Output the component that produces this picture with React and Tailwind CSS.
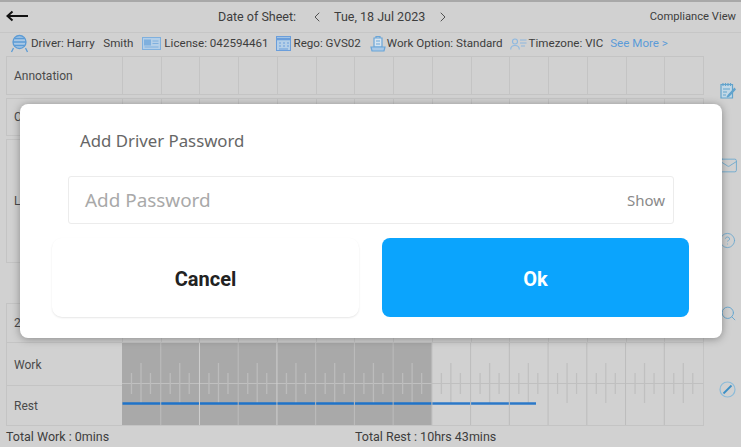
import { ChevronLeft, ChevronRight, Mail, CircleHelp, Search } from 'lucide-react';

const cells = Array.from({ length: 15 }, (_, i) => i);

const GridRow = ({ label, className = '' }) => (
    <div className={`flex border border-[#c4c4c4] ${className}`}>
        <div className="w-[115px] shrink-0 flex items-center pl-[7px] text-[12px] text-[#4a4a4a]">{label}</div>
        {cells.map((c) => (
            <div key={c} className="flex-1 border-l border-[#c4c4c4]" />
        ))}
    </div>
);

// driver badge
const DriverIcon = () => (
    <svg width="19" height="19" viewBox="0 0 19 19" fill="none" stroke="#5b9bd5" strokeWidth="1.3">
        <circle cx="9.5" cy="8" r="6.5" fill="#a9c8e6" />
        <path d="M3 8h13M4.500 4.500h10M4.500 11.500h10M3.500 14l-2 4M15.500 14l2 4" />
    </svg>
);

const LicenseIcon = () => (
    <svg width="19" height="13" viewBox="0 0 19 13" fill="none" stroke="#7fb0de" strokeWidth="1">
        <rect x="0.5" y="0.5" width="18" height="12" fill="#b4cfe8" />
        <rect x="2.500" y="3" width="6" height="5" fill="#7fb0de" />
        <path d="M10.500 4h6M10.500 6.500h6M2.500 10h14" />
    </svg>
);

const RegoIcon = () => (
    <svg width="15" height="15" viewBox="0 0 15 15" fill="none" stroke="#6a9edb" strokeWidth="1">
        <rect x="0.5" y="0.5" width="14" height="14" fill="#b4cfe8" />
        <path d="M0.5 3h14" strokeWidth="2.500" />
        <path d="M3 7h2M7 7h2M11 7h2M3 10h2M7 10h2M11 10h2M3 13h9" />
    </svg>
);

const WorkIcon = () => (
    <svg width="16" height="18" viewBox="0 0 16 18" fill="none" stroke="#6aa5d8" strokeWidth="1.200">
        <path d="M4 3h8v9H4z" fill="#d6e4f0" />
        <path d="M6 3V1.500h4V3M6 6h4M6 9h4" />
        <path d="M1 12h14l-1 4H2z" fill="#a9c8e6" />
    </svg>
);

const TimezoneIcon = () => (
    <svg width="17" height="12" viewBox="0 0 17 12" fill="none" stroke="#8db8e0" strokeWidth="1.100">
        <circle cx="5" cy="3.500" r="2.500" />
        <path d="M0.700 11.500c0-3 2-4 4.300-4s4.300 1 4.300 4" />
        <path d="M10 2h6.500M10 5h6.500M11 8h4" />
    </svg>
);

const NoteIcon = () => (
    <svg width="16" height="17" viewBox="0 0 16 17" fill="none" stroke="#62a3cc" strokeWidth="1.200">
        <path d="M1 2.500h11.500V16H1z" fill="#c3d8e6" />
        <path d="M3 1v3M5.500 1v3M8 1v3M10.500 1v3M3 7h7M3 10h4M3 13h3" />
        <path d="M14.500 6.500L8.500 13l-1.500 2 2.200-1 6-6.500z" fill="#62a3cc" />
    </svg>
);

const SlashIcon = () => (
    <svg width="17" height="17" viewBox="0 0 17 17" fill="none">
        <circle cx="8.500" cy="8.500" r="7.500" stroke="#8dbcd9" strokeWidth="1.200" />
        <path d="M4.500 12.500L12.500 4.500" stroke="#3a8fc6" strokeWidth="1.800" />
    </svg>
);

// tick marks + blue rest line under the Work / Rest rows
const DutyChart = () => {
    const w = 581;
    const cw = w / 15;
    return (
        <svg width={w} height="82" viewBox={`0 0 ${w} 82`} className="absolute left-0 top-0">
            <rect x="0" y="0" width={cw * 8} height="82" fill="#a9a9a9" />
            <path d="M0 40.500H581" stroke="#c0c0c0" strokeWidth="1" />
            {cells.map((c) => {
                const x = c * cw;
                const bright = c === 2 || c === 4;
                return (
                    <g key={c} stroke={c < 8 ? '#bcbcbc' : '#c0c0c0'} strokeWidth="1.300">
                        <path d={`M${x + 9.500} 30V51M${x + 19} 20V60M${x + 28.500} 30V51`} />
                        {c > 0 && (
                            <path d={`M${x} 0V82`} stroke={bright ? '#d0d0d0' : c < 8 ? '#bdbdbd' : '#bcbcbc'} strokeWidth="1" />
                        )}
                    </g>
                );
            })}
            {cells.slice(0, 11).map((c) => (
                <path
                    key={c}
                    d={`M${c * cw + 0.500} 60.500H${c === 10 ? 414 : (c + 1) * cw - 0.500}`}
                    stroke={c < 8 ? '#1f73c9' : '#2b78c8'}
                    strokeWidth="2.500"
                />
            ))}
        </svg>
    );
};

export default function App() {
    return (
        <div className="relative w-[741px] h-[447px] overflow-hidden bg-[#d1d1d1] font-['Roboto',sans-serif] text-[#3d3d3d]">
            {/* Top bar */}
            <header className="h-[33px] flex items-center border-t-2 border-b border-t-[#a8a8a8] border-b-[#c6c6c6] pl-[6px] pr-[5px]">
                <svg width="22" height="12" viewBox="0 0 22 12" fill="none" stroke="#111" strokeWidth="2" className="-mt-[2px]">
                    <path d="M1.500 6H22M6.500 1.500L1.500 6l5 4.500" />
                </svg>
                <div className="flex items-center ml-[190px] mr-auto text-[12.5px]">
                    <span>Date of Sheet:</span>
                    <ChevronLeft size={16} strokeWidth={1.300} className="ml-[13px] mr-[9px]" />
                    <span>Tue, 18 Jul 2023</span>
                    <ChevronRight size={16} strokeWidth={1.300} className="ml-[10px]" />
                </div>
                <span className="text-[11.2px]">Compliance View</span>
            </header>

            {/* Driver info */}
            <div className="h-[23px] -mt-[1px] mb-[1px] flex items-center pl-[10px] text-[11.6px] whitespace-nowrap">
                <DriverIcon />
                <span className="ml-[2px] whitespace-pre">Driver: Harry   Smith</span>
                <span className="ml-[9px]"><LicenseIcon /></span>
                <span className="ml-[3px]">License: 042594461</span>
                <span className="ml-[7px]"><RegoIcon /></span>
                <span className="ml-[3px]">Rego: GVS02</span>
                <span className="ml-[9px]"><WorkIcon /></span>
                <span className="ml-[1px]">Work Option: Standard</span>
                <span className="ml-[7px]"><TimezoneIcon /></span>
                <span className="ml-[2px]">Timezone: VIC</span>
                <span className="ml-[7px] text-[#5b9bd8]">See More &gt;</span>
            </div>

            {/* Log grid and side tools */}
            <div className="flex pl-[6px]">
                <div className="w-[698px] flex flex-col">
                    <GridRow label="Annotation" className="h-[39px]" />
                    <GridRow label="Comment" className="h-[38px] mt-[3px]" />
                    <GridRow label="Log" className="h-[124px] mt-[3px]" />
                    <GridRow label="24hr" className="h-[40px] mt-[40px]" />
                    <div className="relative flex flex-col border-x border-b border-[#c4c4c4]">
                        <div className="h-[43px] w-[115px] pt-[1px] flex items-center pl-[7px] text-[12px] text-[#4a4a4a] border-b border-[#c4c4c4]">Work</div>
                        <div className="h-[39px] w-[115px] flex items-center pl-[7px] text-[12px] text-[#4a4a4a]">Rest</div>
                        <div className="absolute left-[115px] top-0 w-[581px] h-[82px]">
                            <DutyChart />
                        </div>
                    </div>
                </div>
                <div className="flex-1 flex flex-col items-center pt-[26px] pl-[10px] gap-[58px] text-[#6aa8cf]">
                    <NoteIcon />
                    <Mail size={19} strokeWidth={1.100} className="-my-[1px] ml-[2px]" />
                    <CircleHelp size={17} strokeWidth={1.200} />
                    <Search size={17} strokeWidth={1.400} className="ml-[2px] -mt-[2px] mb-[1px]" />
                    <SlashIcon />
                </div>
            </div>

            {/* Totals */}
            <div className="flex items-center pl-[6px] mt-[2px] text-[12.5px]">
                <span className="w-[349px]">Total Work : 0mins</span>
                <span>Total Rest : 10hrs 43mins</span>
            </div>

            {/* Password dialog */}
            <div className="absolute left-[20px] top-[104px] w-[702px] h-[234px] bg-white rounded-[8px] shadow-[0_1px_8px_rgba(0,0,0,0.35)] font-['Noto_Sans',sans-serif]">
                <div className="pl-[60px] pt-[25px] text-[16.800px] leading-[24px] text-[#666]">Add Driver Password</div>
                <div className="mx-[48px] mt-[23px] h-[48px] flex items-center justify-between border border-[#ececec] rounded-[3px] pl-[16px] pr-[8px]">
                    <span className="text-[18.900px] text-[#a9a9a9]">Add Password</span>
                    <span className="text-[15px] text-[#8a8a8a]">Show</span>
                </div>
                <div className="flex gap-[23px] mx-[32px] mt-[14px]">
                    <button className="w-[307px] h-[79px] pt-[3px] bg-white rounded-[10px] shadow-[0_1px_2px_rgba(0,0,0,0.1)] text-[20px] font-bold text-[#222] font-['Roboto',sans-serif]">Cancel</button>
                    <button className="w-[307px] h-[79px] pt-[3px] bg-[#0ba4fd] rounded-[8px] text-[20px] font-bold text-white font-['Roboto',sans-serif]">Ok</button>
                </div>
            </div>
        </div>
    );
}
